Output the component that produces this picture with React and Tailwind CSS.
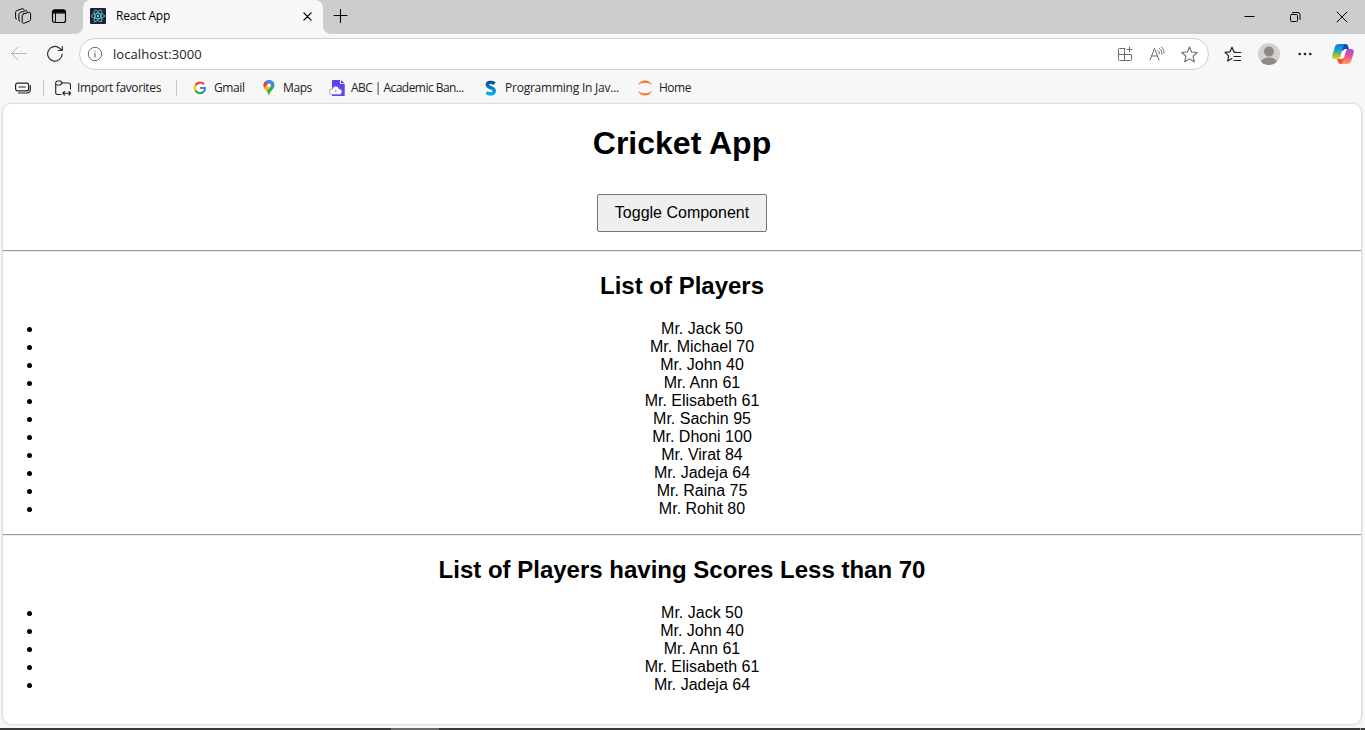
import React from "react";

const allPlayers = [
  ["Jack", 50], ["Michael", 70], ["John", 40], ["Ann", 61], ["Elisabeth", 61], ["Sachin", 95],
  ["Dhoni", 100], ["Virat", 84], ["Jadeja", 64], ["Raina", 75], ["Rohit", 80],
];
const lowScorers = allPlayers.filter(([, score]) => score < 70);

function Icon({ className = "size-4", box = "0 0 16 16", children }) {
  return (
    <svg viewBox={box} className={`shrink-0 ${className}`} fill="none" stroke="currentColor" strokeWidth="1" strokeLinecap="round" strokeLinejoin="round">
      {children}
    </svg>
  );
}

function ReactLogo() {
  return (
    <Icon className="size-4 bg-[#20232a] text-[#61dafb] rounded-[1px]">
      <g strokeWidth="0.75">
        <ellipse cx="8" cy="8" rx="6.6" ry="2.6" />
        <ellipse cx="8" cy="8" rx="6.6" ry="2.6" transform="rotate(60 8 8)" />
        <ellipse cx="8" cy="8" rx="6.6" ry="2.6" transform="rotate(120 8 8)" />
      </g>
      <circle cx="8" cy="8" r="1.2" fill="currentColor" stroke="none" />
    </Icon>
  );
}

function TabStrip() {
  return (
    <div className="flex h-[34px] shrink-0 bg-[#cdcdcd] text-black">
      <div className="shrink-0 bg-[#f7f7f7]">
        <div className="flex h-[34px] w-[83px] rounded-br-[8px] bg-[#cdcdcd] pl-[14px] pt-[7px]">
          <Icon className="h-[18px] w-[18px]" box="0 0 18 18">
            <path d="M9.700 6.800 14.700 5.400c1.200-.3 1.900.2 1.900 1.400v5.300c0 1.100-.4 1.700-1.500 2.100l-4.700 1.900c-1.300.5-2.200 0-2.200-1.300V8.700c0-1 .5-1.600 1.500-1.900z" />
            <path d="M5.700 14.300c-.5-.2-.8-.6-.8-1.300V7.300c0-1 .5-1.600 1.500-1.900l5-1.700c1-.3 1.600 0 1.900.8" />
            <path d="M2.400 12.100c-.5-.2-.8-.6-.8-1.300V5.400c0-1 .5-1.600 1.500-1.900l5-1.700c1-.3 1.600 0 1.900.8" />
          </Icon>
          <Icon className="ml-[19px] mt-[1px] size-4">
            <rect x="1.500" y="2" width="13" height="12.500" rx="2" strokeWidth="1.200" />
            <path d="M1.500 4.700V4c0-1.300.7-2 2-2h9c1.300 0 2 .7 2 2v.7z" fill="currentColor" />
            <path d="M4.500 5v9" />
          </Icon>
        </div>
      </div>
      <div className="bg-[#cdcdcd]">
        <div className="flex h-full w-[240px] items-center rounded-t-[8px] bg-[#f7f7f7] pb-[2px] pl-[7px]">
          <ReactLogo />
          <span className="ml-[10px] w-[183px] font-['Open_Sans',sans-serif] text-[12px] tracking-[-0.24px]">React App</span>
          <Icon className="ml-[4px] mt-[1px] size-[9px]" box="0 0 10 10"><path d="m1 1 8 8M9 1 1 9" strokeWidth="1.400" /></Icon>
        </div>
      </div>
      <div className="flex-1 bg-[#f7f7f7]">
        <div className="flex h-full items-start justify-between rounded-bl-[8px] bg-[#cdcdcd]">
          <Icon className="ml-[10px] mt-[8px] size-4"><path d="M7.500 1.500v13M1 7.500h13" strokeWidth="1.100" /></Icon>
          <div className="flex pr-[17px] pt-[11px]">
            <Icon className="h-[11px] w-[11px]" box="0 0 11 11"><path d="M1 5.500h9" strokeLinecap="square" /></Icon>
            <Icon className="ml-[35px] h-[12px] w-[12px]" box="0 0 12 12"><rect x=".5" y="3.500" width="7" height="7" rx="1" /><path d="M2.500 1.500h5.500a2 2 0 0 1 2 2v5" /></Icon>
            <Icon className="ml-[34px] h-[12px] w-[12px]" box="0 0 12 12"><path d="m1 1 10 10M11 1 1 11" /></Icon>
          </div>
        </div>
      </div>
    </div>
  );
}

const starPath = "m8 1 2 4.600 5.300.5-4 3.500 1.200 5.200L8 12.100l-4.500 2.700 1.200-5.200-4-3.500L6 5.600z";

function AddressBar() {
  return (
    <div className="flex h-[40px] shrink-0 items-center pl-[10px] text-[#303030]">
      <Icon className="h-[16px] w-[18px] text-[#b5b5b5]" box="0 0 18 16"><path d="M16.500 7.500h-15M8 1 1.500 7.500 8 14" /></Icon>
      <Icon className="ml-[18px] h-[18px] w-[18px]" box="0 0 18 18"><path d="M16.200 9A7.300 7.300 0 1 1 13.600 3.200L16 5.400M16.300 1.500v4h-4" strokeWidth="1.200" /></Icon>
      <div className="ml-[15px] flex h-[32px] w-[1130px] items-center rounded-full border border-[#cfcfcf] bg-white pl-[7px] pr-[10px] text-[#6a6a6a]">
        <Icon className="h-4 w-4"><circle cx="8" cy="8" r="6.700" /><path d="M8 7.500v3.500M8 5.100v.2" strokeWidth="1.200" /></Icon>
        <span className="ml-[10px] mt-[1px] flex-1 font-['Open_Sans',sans-serif] text-[13px] tracking-[0.08px] text-[#222]">localhost:3000</span>
        <Icon><path d="M8 2.500H2.500a1 1 0 0 0-1 1v10a1 1 0 0 0 1 1h11a1 1 0 0 0 1-1v-5h-13M7.500 2.500v12M12.500 1v5M10 3.500h5" /></Icon>
        <Icon className="ml-[16px] size-4"><path d="M1 14 5.500 2.500 10 14M2.700 10h5.600M8.800 4.300c1.200.9 1.700 2 1.500 3.500M10.500 2.500c2 1.500 2.600 3.200 2.200 5.500M12.500 1.200c2 1.800 2.800 3.800 2.500 6" /></Icon>
        <Icon className="ml-[16px] h-[17px] w-[17px]"><path d={starPath} /></Icon>
      </div>
      <Icon className="ml-[15px] h-[17px] w-[18px] text-[#202020]" box="0 0 18 17"><path d="M10.800 5.900 9.900 5.800 8 1.300 6 5.800l-5 .6 3.700 3.500-1 5.100L8 12.600M11 6.500h5.700M10 10.500h6.500M10 14.500h6.500" strokeWidth="1.200" /></Icon>
      <svg viewBox="0 0 22 22" className="ml-[16px] size-[22px] shrink-0"><clipPath id="avatar"><circle cx="11" cy="11" r="11" /></clipPath><g clipPath="url(#avatar)"><path fill="#d3d0cd" d="M0 0h22v22H0z" /><circle cx="11" cy="8.500" r="5" fill="#8d8985" /><ellipse cx="11" cy="19.200" rx="8" ry="4.700" fill="#8d8985" /></g></svg>
      <svg viewBox="0 0 14 4" className="ml-[18px] h-[4px] w-[14px] shrink-0 fill-[#222]"><circle cx="1.700" cy="2" r="1.300" /><circle cx="7" cy="2" r="1.300" /><circle cx="12.300" cy="2" r="1.300" /></svg>
      <CopilotLogo />
    </div>
  );
}

function CopilotLogo() {
  return (
    <svg viewBox="0 0 22 20" className="ml-[20px] h-[20px] w-[22px] shrink-0">
      <defs>
        <linearGradient id="copilotLeft" x1="0" y1="0" x2="0" y2="1"><stop stopColor="#0d7fe8" /><stop offset=".4" stopColor="#1c9bd0" /><stop offset=".7" stopColor="#7abf55" /><stop offset="1" stopColor="#ffca0a" /></linearGradient>
        <linearGradient id="copilotRight" x1="0" y1="0" x2="0" y2="1"><stop stopColor="#a04cf0" /><stop offset=".5" stopColor="#ee5096" /><stop offset="1" stopColor="#ffa35c" /></linearGradient>
      </defs>
      <path d="M9 0h4.500c1.500 0 2.200.8 2.600 2l1 3.200h-3c-1.500 0-2.300.8-2.800 2.300L9 5z" fill="#1747c0" />
      <path d="M4.600 14.800h3.600c1.500 0 2-.8 2.500-2.400L13 15l-1.200 5H8.500c-1.300 0-2-.8-2.400-2z" fill="#ee5540" />
      <path d="M6.500 0h6.700c-1 0-1.500.8-1.900 2L9 10.500l-.9 2.500c-.5 1.300-1.300 1.900-2.800 1.900H3C.7 14.900-.2 13.500.3 11.300L2.800 3C3.400 1 4.600 0 6.500 0z" fill="url(#copilotLeft)" />
      <path d="M15.500 20H8.800c1 0 1.500-.8 1.900-2l2.300-8.500.9-2.500c.5-1.300 1.300-1.900 2.800-1.900H19c2.300 0 3.200 1.400 2.700 3.600L19.200 17c-.6 2-1.800 3-3.700 3z" fill="url(#copilotRight)" />
      <path d="M13.600 5.200h2.200c-1.200.3-1.700 1-2.100 2.400l-1.500 5.200c-.4 1.400-1.200 2-2.600 2H7.300c1.200-.3 1.800-1 2.200-2.400l1.500-5.200c.4-1.400 1.200-2 2.600-2z" fill="#fff" />
    </svg>
  );
}

function Bookmark({ icon, label, className }) {
  return <div className={`flex shrink-0 items-center ${className}`}>{icon}<span className="ml-[6px] whitespace-nowrap">{label}</span></div>;
}

function Favorites() {
  return (
    <div className="flex h-[29px] shrink-0 items-center pb-[1px] pl-[15px] font-['Open_Sans',sans-serif] text-[12px] text-[#222]">
      <Icon className="h-[12px] w-[16px]" box="0 0 16 12"><rect x=".6" y="1.100" width="13" height="7.800" rx="2" strokeWidth="1.200" /><path d="M4 5h6.300M15.300 3.500V8a3 3 0 0 1-3 3H3.500" strokeWidth="1.200" /></Icon>
      <span className="ml-[12px] h-[16px] w-px bg-[#c8c8c8]" />
      <Bookmark className="ml-[11px] w-[110px] tracking-[-0.37px]" label="Import favorites" icon={<Icon className="h-[16px] w-[16px]"><path d="M6 14.500H2.500A1.800 1.800 0 0 1 .7 12.700V2.800A1.800 1.800 0 0 1 2.500 1h2.800l2 2h6.200a2 2 0 0 1 2 2v4M.7 5h4.600l2-2M8 13.200h7.500M9.500 11.500 7.800 13.200 9.500 15M14 11.500l1.700 1.700L14 15" strokeWidth="1.100" /></Icon>} />
      <span className="ml-[11px] h-[16px] w-px bg-[#c8c8c8]" />
      <Bookmark className="ml-[15px] w-[69px] tracking-[-0.4px]" label="Gmail" icon={<svg viewBox="0 0 16 16" className="size-4 shrink-0 rounded-full bg-white" fill="none" strokeWidth="2.200"><path d="M12 4.300A5.100 5.100 0 0 0 3.500 5.400" stroke="#ea4335" /><path d="M3.500 5.400a5.200 5.200 0 0 0 0 5.200" stroke="#fbbc05" /><path d="M3.500 10.600a5.200 5.200 0 0 0 7.900 1.300" stroke="#34a853" /><path d="M11.400 11.900A5 5 0 0 0 13 8H8" stroke="#4285f4" /></svg>} />
      <Bookmark className="w-[68px] tracking-[-0.4px]" label="Maps" icon={<svg viewBox="0 0 16 16" className="size-4 shrink-0"><clipPath id="mapPin"><path d="M8 0a5.500 5.500 0 0 0-5.500 5.500C2.500 9.200 7 10 8 16c1-6 5.500-6.800 5.500-10.500A5.500 5.500 0 0 0 8 0z" /></clipPath><g clipPath="url(#mapPin)"><path d="M0 0h16v16H0z" fill="#34a853" /><path d="M2 0h12v4L8 7z" fill="#4285f4" /><path d="m0 4 4-3 4 4-5 5z" fill="#ea4335" /><path d="m2 9 4-4 3 3-4 4z" fill="#fbbc04" /></g><circle cx="8" cy="5.500" r="1.900" fill="white" /></svg>} />
      <Bookmark className="w-[154px] tracking-[-0.54px]" label="ABC | Academic Ban..." icon={<svg viewBox="0 0 16 16" className="size-4 shrink-0"><path d="M3 0h8v4h4.700v12H3z" fill="#6242ed" /><path d="m12 0 3.700 3.200H12z" fill="#6242ed" /><path d="M3.300 14.500a2.800 2.800 0 0 1 0-5.600 3.500 3.500 0 0 1 6.800 0 2.800 2.800 0 0 1 0 5.600z" fill="white" stroke="#8d76f3" strokeWidth=".8" /><path d="M6.800 12V9.800" stroke="#6242ed" strokeWidth=".8" /></svg>} />
      <Bookmark className="w-[154px] tracking-[-0.23px]" label="Programming In Jav..." icon={<svg viewBox="0 0 16 16" className="size-4 shrink-0"><defs><linearGradient id="blueMark" x2="0" y2="1"><stop stopColor="#0b4fa0" /><stop offset="1" stopColor="#00aeef" /></linearGradient></defs><path d="M11.800 3.600C9 1.900 4.300 1.700 4.300 4.700c0 3.500 7 2.500 7 6.300 0 3.500-4.900 3.500-7.900 1.800" stroke="url(#blueMark)" strokeWidth="3.400" fill="none" /></svg>} />
      <Bookmark className="tracking-[-0.5px]" label="Home" icon={<svg viewBox="0 0 16 16" className="size-4 shrink-0 fill-[#f37726]"><path d="M.8 5C4-1 12-1 15.200 5 11 1.900 5 1.900.8 5zM.8 11c3.200 6 11.200 6 14.400 0-4.200 3.100-10.200 3.100-14.400 0z" /></svg>} />
    </div>
  );
}

function PlayerList({ title, players }) {
  return (
    <section>
      <h2 className="mb-[20px] mt-[20px] text-[24px] font-bold leading-[28px]">{title}</h2>
      <ul className="list-disc pl-[40px] text-[16px] leading-[18px]">
        {players.map(([name, score]) => <li key={name}>Mr. {name} {score}</li>)}
      </ul>
    </section>
  );
}

export default function App() {
  return (
    <div className="flex h-[730px] w-[1365px] flex-col overflow-hidden bg-[#f7f7f7]">
      <TabStrip />
      <AddressBar />
      <Favorites />
      <main className="mx-[3px] mt-[1px] h-[620px] w-[1358px] shrink-0 overflow-hidden rounded-[8px] bg-white text-center font-['Liberation_Sans',Arial,sans-serif] text-black shadow-[0_0_2px_1px_rgba(0,0,0,0.14)]">
        <h1 className="mt-[21px] text-[32px] font-bold leading-[37px]">Cricket App</h1>
        <button className="mt-[32px] block h-[38px] w-[170px] mx-auto rounded-[2px] border border-[#767676] bg-[#efefef] text-[16px]">Toggle Component</button>
        <hr className="mt-[18px] h-[2px] border-0 border-t border-t-[#9a9a9a] bg-[#eeeeee]" />
        <PlayerList title="List of Players" players={allPlayers} />
        <hr className="mt-[16px] h-[2px] border-0 border-t border-t-[#9a9a9a] bg-[#eeeeee]" />
        <PlayerList title="List of Players having Scores Less than 70" players={lowScorers} />
      </main>
      <footer className="mt-auto flex h-[2px] shrink-0 bg-[#3c3836]"><span className="ml-[391px] w-[48px] bg-[#6c6967]" /><span className="ml-auto mr-[4px] w-px bg-[#999]" /></footer>
    </div>
  );
}
